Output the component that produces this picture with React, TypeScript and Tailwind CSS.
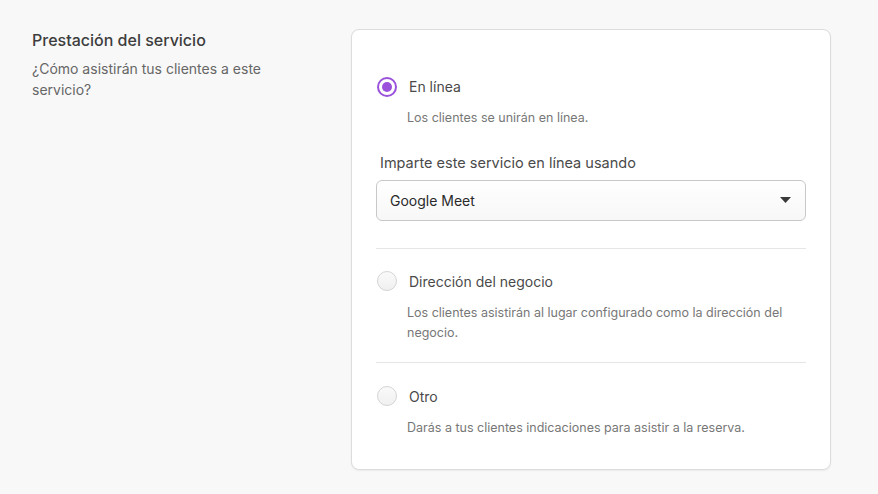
import React from "react";

interface OptionProps {
  label: string;
  description: React.ReactNode;
  selected?: boolean;
  children?: React.ReactNode;
}

function Radio({ selected }: { selected?: boolean }) {
  if (selected) {
    return (
      <span className="flex h-5 w-5 shrink-0 items-center justify-center rounded-full border-2 border-[#9a52dc] bg-white">
        <span className="h-[10px] w-[10px] rounded-full bg-[#9a52dc]" />
      </span>
    );
  }
  return (
    <span className="h-5 w-5 shrink-0 rounded-full border border-[#d4d4d4] bg-gradient-to-b from-[#fafafa] to-[#f0f0f0]" />
  );
}

function Option({ label, description, selected, children }: OptionProps) {
  return (
    <div>
      <div className="flex items-center gap-[12px] pl-[1px]">
        <Radio selected={selected} />
        <span className="text-[14px] text-[#4a4a4a]">{label}</span>
      </div>
      <p className="mt-[11px] pl-[31px] text-[12.5px] leading-[20px] text-[#777]">{description}</p>
      {children}
    </div>
  );
}

export default function App() {
  return (
    <div
      className="flex h-[494px] w-[878px] bg-[#f8f8f8] pt-[29px]"
      style={{ fontFamily: "Inter, 'Noto Sans', sans-serif" }}
    >
      <div className="w-[351px] shrink-0 pl-[32px] pt-[1px]">
        <h2 className="text-[16px] font-medium leading-[20px] text-[#3d3d3d]">Prestación del servicio</h2>
        <p className="mt-[8px] w-[260px] text-[14px] leading-[21px] text-[#666]">
          ¿Cómo asistirán tus clientes a este servicio?
        </p>
      </div>

      <div className="h-[441px] w-[480px] rounded-[8px] border border-[#dcdcdc] bg-white px-[24px] pt-[46px] shadow-[0_1px_2px_rgba(0,0,0,0.06)]">
        <Option label="En línea" description="Los clientes se unirán en línea." selected>
          <div className="mt-[24px] pl-[4px] text-[14.5px] text-[#4a4a4a]">Imparte este servicio en línea usando</div>
          <button className="mt-[6px] flex h-[41px] w-full items-center justify-between rounded-[6px] border border-[#c8c8c8] bg-gradient-to-b from-white to-[#f7f7f7] px-[13px] text-left">
            <span className="text-[14px] text-[#2a2a2a]">Google Meet</span>
            <svg width="11" height="6" viewBox="0 0 11 6" className="mr-[1px]">
              <path d="M0 0h11L5.5 6z" fill="#3a3a3a" />
            </svg>
          </button>
        </Option>

        <div className="mt-[27px] border-t border-[#e6e6e6]" />

        <div className="pt-[22px]">
          <Option
            label="Dirección del negocio"
            description="Los clientes asistirán al lugar configurado como la dirección del negocio."
          />
        </div>

        <div className="mt-[19px] border-t border-[#e6e6e6]" />

        <div className="pt-[23px]">
          <Option label="Otro" description="Darás a tus clientes indicaciones para asistir a la reserva." />
        </div>
      </div>
    </div>
  );
}
